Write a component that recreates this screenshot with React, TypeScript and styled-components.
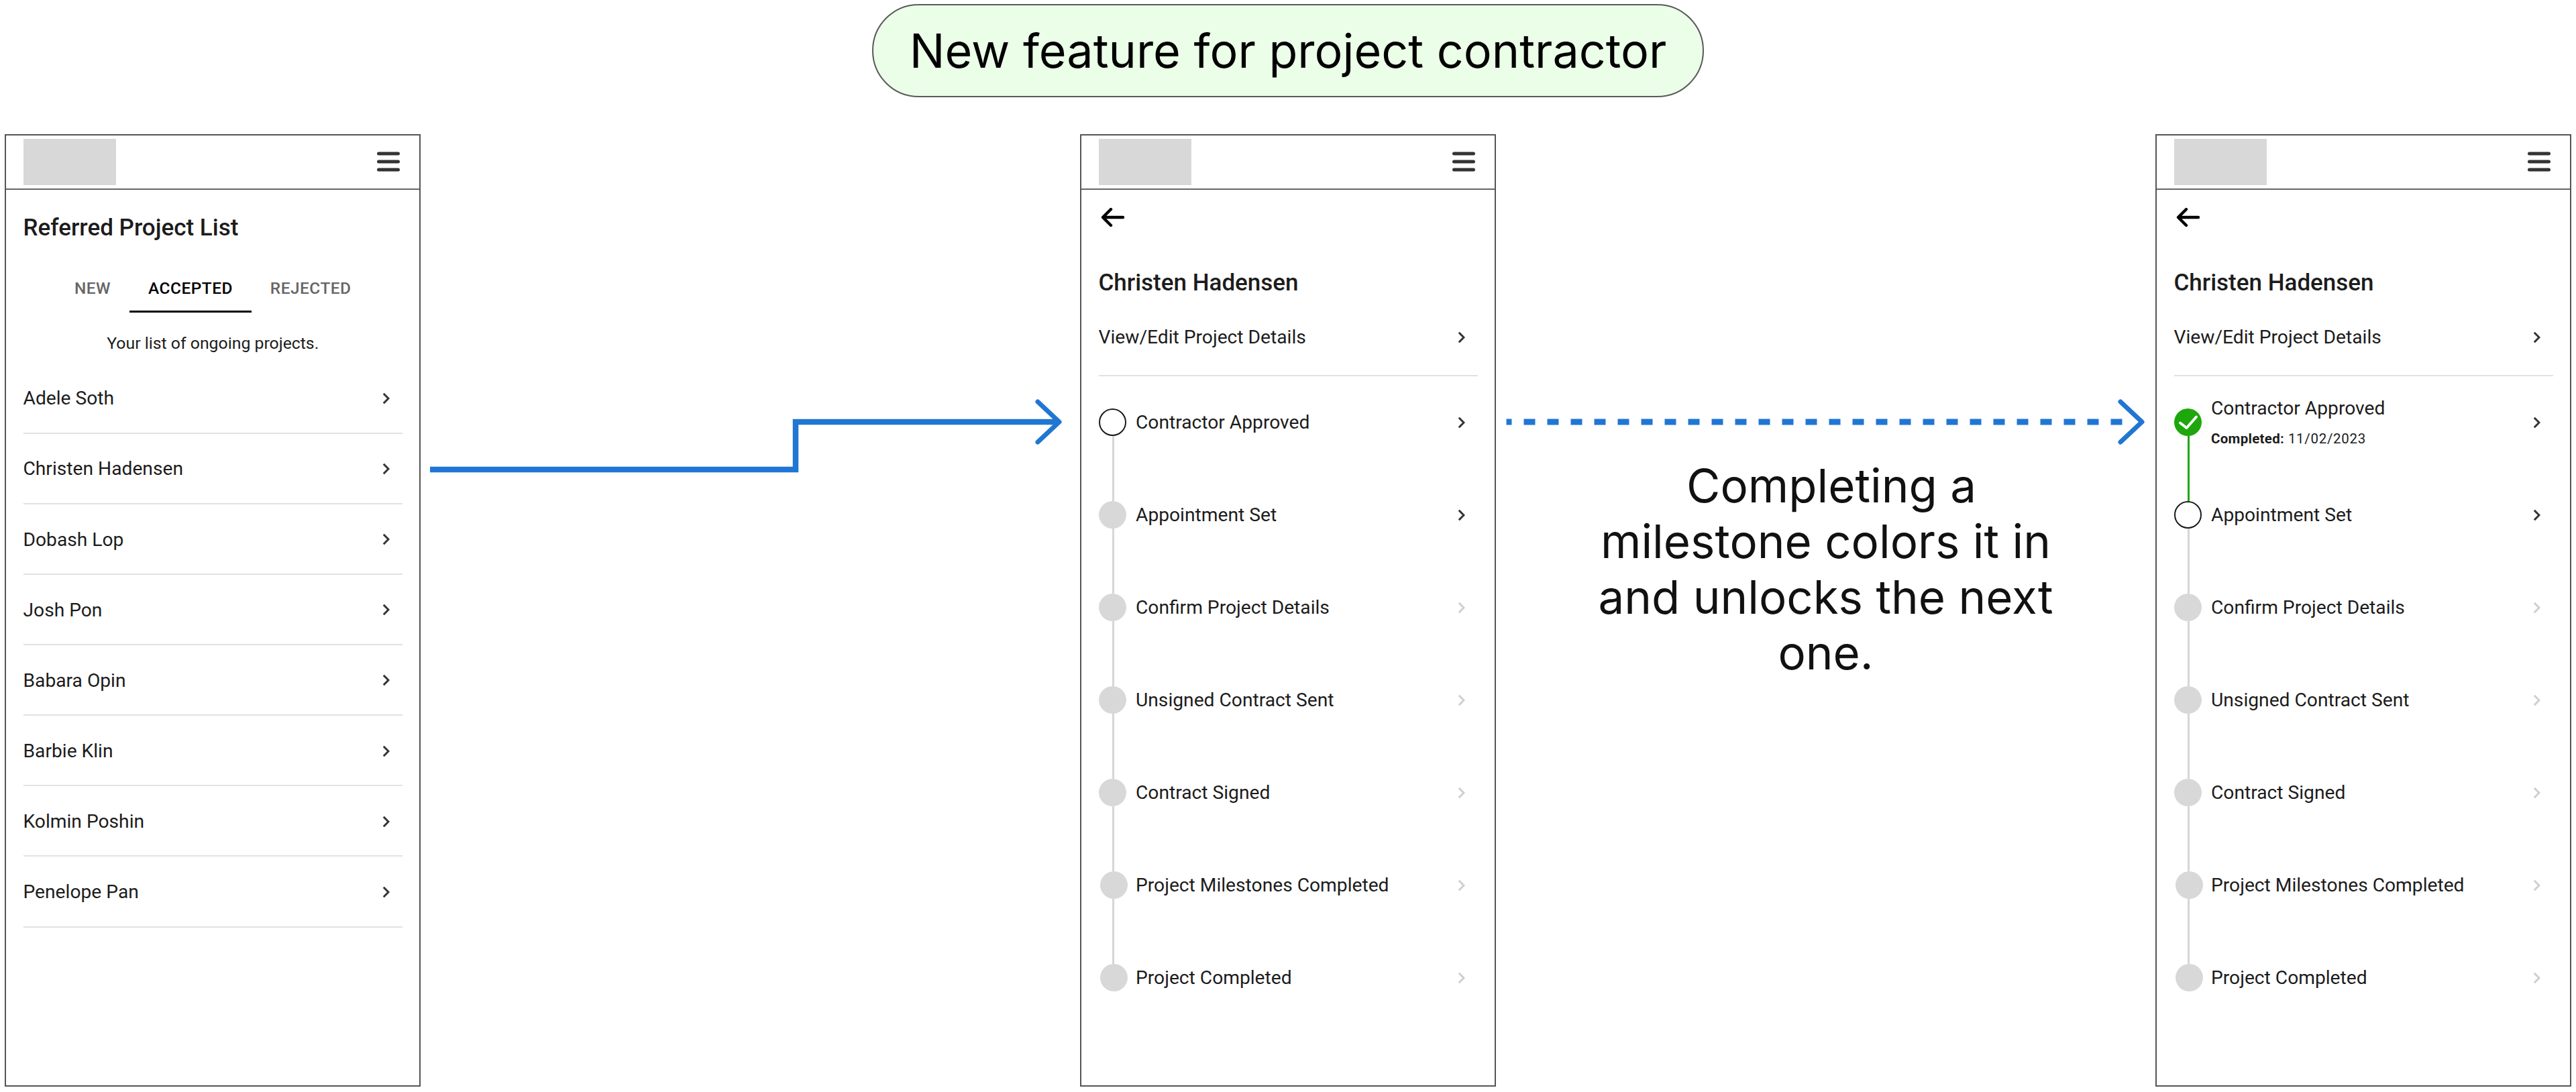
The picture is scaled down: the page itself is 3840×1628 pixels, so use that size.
import React from "react";
import styled, { createGlobalStyle } from "styled-components";

const Global = createGlobalStyle`
  html, body { margin: 0; padding: 0; background: #fff; }
  body { font-family: Roboto, "Liberation Sans", sans-serif; color: #1c1c1c; }
  * { box-sizing: border-box; }
`;

const Page = styled.div`
  width: 3840px;
  height: 1628px;
  overflow: hidden;
  padding-top: 6px;
  display: flex;
  flex-direction: column;
`;
const TitleBar = styled.div`
  display: flex;
  justify-content: center;
  margin-bottom: 55px;
`;
const Pill = styled.h1`
  margin: 0;
  width: 1240px;
  height: 139px;
  border: 2px solid #5a5a5a;
  border-radius: 70px;
  background: #ebffe8;
  display: flex;
  align-items: center;
  justify-content: center;
  font: 400 70px/1 Inter, sans-serif;
  color: #000;
`;
const Stage = styled.div`
  display: flex;
  padding-left: 7px;
`;
const Phone = styled.section`
  flex: none;
  width: 620px;
  height: 1420px;
  border: 2px solid #555;
  background: #fff;
`;
const PhoneHeader = styled.header`
  height: 81px;
  border-bottom: 2px solid #666;
  padding: 5px 29px 0 25.5px;
  display: flex;
  justify-content: space-between;
`;
const Logo = styled.div`
  width: 138px;
  height: 69px;
  background: #d8d8d8;
`;
const Burger = styled.svg`
  width: 34px;
  height: 30px;
  margin-top: 19px;
`;
const Body = styled.div`
  padding: 0 25px 0 25.5px;
`;
const ScreenTitle = styled.h2`
  margin: 37px 0 0;
  font-size: 35px;
  font-weight: 500;
  line-height: 40px;
`;
const Tabs = styled.div`
  display: flex;
  justify-content: center;
  margin-top: 48px;
`;
const Tab = styled.div<{ $active?: boolean }>`
  height: 58px;
  padding: 0 28px;
  line-height: 43px;
  font-size: 24.4px;
  font-weight: 500;
  letter-spacing: 0.5px;
  color: ${(p) => (p.$active ? "#000" : "#666")};
  border-bottom: 3px solid ${(p) => (p.$active ? "#000" : "transparent")};
`;
const Note = styled.p`
  margin: 28px 0 0;
  text-align: center;
  font-size: 24.8px;
  line-height: 36px;
  color: #1c1c1c;
`;
const List = styled.ul`
  list-style: none;
  margin: 11.5px 0 0;
  padding: 0;
`;
const Row = styled.li`
  height: 105.15px;
  padding: 1.5px 19px 0 0;
  border-bottom: 2px solid #e2e2e2;
  display: flex;
  align-items: center;
  justify-content: space-between;
  font-size: 28.2px;
`;
const Back = styled.svg`
  display: block;
  width: 36px;
  height: 30px;
  margin: 26px 0 0 3px;
`;
const Name = styled.h2`
  margin: 63px 0 0;
  font-size: 35px;
  font-weight: 500;
  line-height: 40px;
`;
const DetailRow = styled.div`
  height: 119px;
  padding: 4px 19px 0 0;
  border-bottom: 2px solid #e2e2e2;
  display: flex;
  align-items: center;
  justify-content: space-between;
  font-size: 28.2px;
`;
const Steps = styled.ol`
  list-style: none;
  margin: 48px 0 0;
  padding: 0;
`;
const Step = styled.li`
  height: 138px;
  display: flex;
`;
const Marker = styled.div`
  flex: none;
  width: 41px;
  margin-right: 14.5px;
  display: flex;
  flex-direction: column;
`;
const Dot = styled.div<{ $state: "done" | "open" | "locked"; $nudge?: boolean }>`
  flex: none;
  width: 41px;
  height: 41px;
  border-radius: 50%;
  margin-left: ${(p) => (p.$nudge ? 2 : 0)}px;
  background: ${(p) => (p.$state === "done" ? "#1ea70c" : p.$state === "open" ? "#fff" : "#d8d8d8")};
  border: ${(p) => (p.$state === "open" ? "2px solid #1a1a1a" : "none")};
`;
const Check = styled.svg`
  display: block;
  width: 41px;
  height: 41px;
`;
const Connector = styled.div<{ $done?: boolean }>`
  width: 3px;
  flex: 1;
  margin-left: 20px;
  background: ${(p) => (p.$done ? "#1ea70c" : "#d6d6d6")};
`;
const StepHead = styled.div`
  flex: 1;
  height: 41px;
  padding-right: 19px;
  display: flex;
  align-items: center;
  justify-content: space-between;
`;
const StepText = styled.div<{ $withDate?: boolean }>`
  padding-top: ${(p) => (p.$withDate ? 3 : 1)}px;
`;
const StepLabel = styled.div`
  font-size: 28.2px;
  line-height: 46px;
`;
const Completed = styled.div`
  font-size: 20.5px;
  line-height: 44px;
  letter-spacing: 0.7px;
  b { font-weight: 700; letter-spacing: 0.3px; }
`;
const Gap = styled.div`
  flex: none;
  width: 983px;
  display: flex;
  flex-direction: column;
`;
const FlowArrow = styled.svg<{ $h: number }>`
  display: block;
  flex: none;
  margin-top: 390px;
  width: 983px;
  height: ${(p) => p.$h}px;
`;
const Caption = styled.p`
  margin: 18px 0 0;
  text-align: center;
  font: 400 69px/83px Inter, sans-serif;
  color: #111;
`;
const CaptionLead = styled.span`
  padding-left: 17px;
`;
const ChevronSvg = styled.svg`
  flex: none;
  width: 11px;
  height: 18px;
`;

const Chevron = ({ muted }: { muted?: boolean }) => (
  <ChevronSvg viewBox="0 0 11 18">
    <path d="M1.8 1.8 9 9 1.8 16.2" fill="none" stroke={muted ? "#cfcfcf" : "#333"} strokeWidth="3" />
  </ChevronSvg>
);

const Header = () => (
  <PhoneHeader>
    <Logo />
    <Burger viewBox="0 0 34 30">
      <path d="M2.5 3h29M2.5 15h29M2.5 27h29" stroke="#333" strokeWidth="5" strokeLinecap="round" fill="none" />
    </Burger>
  </PhoneHeader>
);

const people = ["Adele Soth", "Christen Hadensen", "Dobash Lop", "Josh Pon", "Babara Opin", "Barbie Klin", "Kolmin Poshin", "Penelope Pan"];
const stepNames = ["Contractor Approved", "Appointment Set", "Confirm Project Details", "Unsigned Contract Sent", "Contract Signed", "Project Milestones Completed", "Project Completed"];

const Detail = ({ progressed }: { progressed?: boolean }) => (
  <Phone>
    <Header />
    <Body>
      <Back viewBox="0 0 36 30">
        <path d="M33 15H4M15 3 3 15l12 12" fill="none" stroke="#000" strokeWidth="4.4" strokeLinecap="round" strokeLinejoin="round" />
      </Back>
      <Name>Christen Hadensen</Name>
      <DetailRow>
        View/Edit Project Details
        <Chevron />
      </DetailRow>
      <Steps>
        {stepNames.map((s, i) => {
          const state = progressed ? (i === 0 ? "done" : i === 1 ? "open" : "locked") : i === 0 ? "open" : "locked";
          return (
            <Step key={s}>
              <Marker>
                <Dot $state={state} $nudge={i >= 5}>
                  {state === "done" && (
                    <Check viewBox="0 0 41 41">
                      <path d="M9 21.5 18.5 29 33 12.5" fill="none" stroke="#fff" strokeWidth="4" strokeLinecap="round" strokeLinejoin="round" />
                    </Check>
                  )}
                </Dot>
                {i < stepNames.length - 1 && <Connector $done={progressed && i === 0} />}
              </Marker>
              <StepHead>
                <StepText $withDate={state === "done"}>
                  <StepLabel>{s}</StepLabel>
                  {state === "done" && (
                    <Completed>
                      <b>Completed:</b> 11/02/2023
                    </Completed>
                  )}
                </StepText>
                <Chevron muted={i > 1} />
              </StepHead>
            </Step>
          );
        })}
      </Steps>
    </Body>
  </Phone>
);

export default function App() {
  return (
    <Page>
      <Global />
      <TitleBar>
        <Pill>New feature for project contractor</Pill>
      </TitleBar>
      <Stage>
        <Phone>
          <Header />
          <Body>
            <ScreenTitle>Referred Project List</ScreenTitle>
            <Tabs>
              <Tab>NEW</Tab>
              <Tab $active>ACCEPTED</Tab>
              <Tab>REJECTED</Tab>
            </Tabs>
            <Note>Your list of ongoing projects.</Note>
            <List>
              {people.map((p) => (
                <Row key={p}>
                  {p}
                  <Chevron />
                </Row>
              ))}
            </List>
          </Body>
        </Phone>
        <Gap>
          <FlowArrow $h={120} viewBox="0 0 983 120">
            <path d="M14 110H559V39H950" fill="none" stroke="#2176d3" strokeWidth="8.5" />
            <path d="M920 9 952 39 920 69" fill="none" stroke="#2176d3" strokeWidth="7" strokeLinecap="round" strokeLinejoin="round" />
          </FlowArrow>
        </Gap>
        <Detail />
        <Gap>
          <FlowArrow $h={75} viewBox="0 0 983 75">
            <path d="M15.5 39H934" fill="none" stroke="#2176d3" strokeWidth="9" strokeDasharray="17 18" strokeDashoffset="9" />
            <path d="M931 9 963 39 931 69" fill="none" stroke="#2176d3" strokeWidth="7" strokeLinecap="round" strokeLinejoin="round" />
          </FlowArrow>
          <Caption>
            <CaptionLead>Completing a</CaptionLead>
            <br />
            milestone colors it in
            <br />
            and unlocks the next
            <br />
            one.
          </Caption>
        </Gap>
        <Detail progressed />
      </Stage>
    </Page>
  );
}
